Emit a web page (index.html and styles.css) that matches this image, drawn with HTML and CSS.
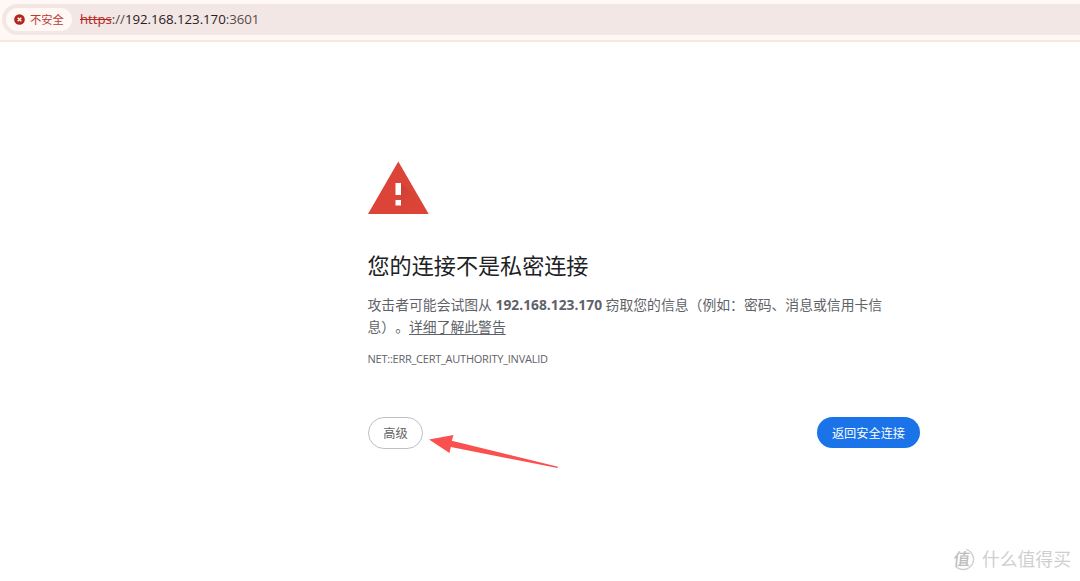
FILE: index.html
```html
<!DOCTYPE html>
<html lang="zh-CN">
<head>
<meta charset="utf-8">
<title>隐私设置错误</title>
<link rel="stylesheet" href="styles.css">
</head>
<body>
<header class="toolbar">
  <div class="omnibox">
    <div class="chip">
      <svg class="chip-icon" viewBox="0 0 12 12"><circle cx="6" cy="6" r="5.800" fill="#b3261e"/><path d="M4 4l4 4M8 4L4 8" stroke="#fff8f5" stroke-width="1.600"/></svg>
      <span>不安全</span>
    </div>
    <div class="url"><span class="scheme">https</span><span class="sep">://</span><span class="host">192.168.123.170</span><span class="port">:3601</span></div>
  </div>
</header>
<main class="interstitial">
  <svg class="warning" viewBox="0 0 61 53">
    <defs><linearGradient id="shade" x1="0" y1="0" x2="1" y2="1"><stop offset="0" stop-color="#b93a31" stop-opacity=".8"/><stop offset=".7" stop-color="#db4437" stop-opacity="0"/></linearGradient></defs>
    <path fill="#db4437" d="M30.300 0.500L60.700 53H0z"/>
    <path fill="url(#shade)" d="M33 22l18 18 7.500 13H37.500L27.500 44l5.500-6z"/>
    <path fill="#fff" d="M27.500 22h5.500v12h-5.500zM27.500 39h5.500v5.500h-5.500z"/>
  </svg>
  <h1 class="title">您的连接不是私密连接</h1>
  <p class="message">攻击者可能会试图从 <strong class="domain">192.168.123.170</strong> 窃取您的信息（例如：密码、消息或信用卡信<br>息）。<a class="learn">详细了解此警告</a></p>
  <p class="code">NET::ERR_CERT_AUTHORITY_INVALID</p>
  <div class="actions">
    <button class="btn advanced">高级</button>
    <button class="btn primary">返回安全连接</button>
  </div>
</main>
<svg class="arrow" viewBox="0 0 132 36"><path fill="#fb5050" d="M1 5.500L25.500 1 23.800 6.700 130 32.700 129.500 34 22.800 13 21.500 19z"/></svg>
<div class="watermark">
  <svg class="mark" viewBox="0 0 24 24"><path d="M15 2.300A10.300 10.300 0 1 1 4.500 19" fill="none" stroke="#cfcfcf" stroke-width="1.400"/><text class="mark-text" transform="skewX(-6)" x="4" y="18">值</text></svg>
  <span>什么值得买</span>
</div>
</body>
</html>
```
FILE: styles.css
```css
body {
  margin: 0;
  width: 1080px;
  height: 581px;
  overflow: hidden;
  background: #fff;
  font-family: "Open Sans", "Noto Sans CJK SC", sans-serif;
  text-spacing-trim: space-all;
}
.toolbar {
  box-sizing: border-box;
  height: 42px;
  padding: 4px 0 0 2px;
  background: #fff8f5;
  border-bottom: 2px solid #f8e8da;
}
.omnibox {
  box-sizing: border-box;
  display: flex;
  align-items: center;
  height: 31px;
  padding-left: 4px;
  border-radius: 16px 0 0 16px;
  background: #f2e7e5;
}
.chip {
  box-sizing: border-box;
  display: flex;
  align-items: center;
  gap: 5px;
  width: 66px;
  height: 23px;
  padding-left: 8px;
  border-radius: 12px;
  background: #fff8f5;
  color: #b93a33;
  font-size: 11.300px;
  line-height: 23px;
  white-space: nowrap;
}
.chip-icon { width: 11px; height: 11px; flex: none; }
.url {
  margin-left: 8px;
  color: #28201f;
  font-size: 13.300px;
  letter-spacing: -0.060px;
  line-height: 23px;
  white-space: nowrap;
}
.scheme { color: #b3261e; text-decoration: line-through; }
.port, .sep { color: #554a48; }
.interstitial {
  width: 552px;
  margin-left: 368px;
  padding-top: 119px;
  color: #5f6368;
}
.warning { display: block; width: 61px; height: 53px; }
.title {
  margin: 35px 0 0 -0.500px;
  color: #202124;
  font-size: 22.100px;
  font-weight: 400;
  line-height: 32px;
  white-space: nowrap;
}
.message {
  margin: 13px 0 0 -0.500px;
  font-size: 13.830px;
  line-height: 22px;
  white-space: nowrap;
}
.domain { font-size: 13.800px; }
.learn { text-decoration: underline; text-underline-offset: 2px; }
.code {
  margin: 13px 0 0 -0.500px;
  font-size: 11px;
  letter-spacing: -0.240px;
  line-height: 16px;
}
.actions {
  display: flex;
  align-items: flex-start;
  justify-content: space-between;
  margin-top: 50px;
}
.btn {
  box-sizing: border-box;
  padding: 2px 0 0;
  font-family: inherit;
  font-size: 12.200px;
  line-height: 18px;
  white-space: nowrap;
}
.advanced {
  width: 55px;
  height: 32px;
  border: 1px solid #bdc1c6;
  border-radius: 16px;
  background: #fff;
  color: #5f6368;
}
.primary {
  width: 103px;
  height: 31px;
  border: 0;
  border-radius: 16px;
  background: #1a73e8;
  color: #fff;
}
.arrow {
  position: absolute;
  left: 428px;
  top: 434px;
  width: 132px;
  height: 36px;
}
.watermark {
  position: absolute;
  left: 951px;
  top: 547px;
  display: flex;
  align-items: center;
  gap: 7px;
  color: #cfcfcf;
  font-size: 17.800px;
  line-height: 24px;
  white-space: nowrap;
}
.mark { width: 24px; height: 24px; }
.mark-text { fill: #bdbdbd; font-size: 16.500px; font-weight: 500; }
```
